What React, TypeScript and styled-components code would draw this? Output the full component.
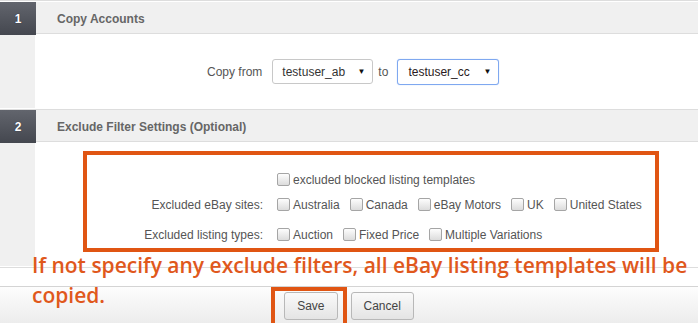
import React from 'react';
import styled, { createGlobalStyle } from 'styled-components';

const GlobalStyle = createGlobalStyle`
  html, body {
    margin: 0;
    padding: 0;
    background: #fff;
  }
  body {
    font-family: 'Liberation Sans', Arial, sans-serif;
    font-size: 12px;
    color: #555;
  }
`;

const sites = ['Australia', 'Canada', 'eBay Motors', 'UK', 'United States'];
const listingTypes = ['Auction', 'Fixed Price', 'Multiple Variations'];

const App = () => {
  return (
    <>
      <GlobalStyle />
      <Page>
        <Section>
          <Header>
            <Badge>1</Badge>
            <HeaderTitle>Copy Accounts</HeaderTitle>
          </Header>
          <Body $height={73}>
            <Gutter />
            <CopyRow>
              <span>Copy from</span>
              <SelectBox>
                <span>testuser_ab</span>
                <Arrow>▼</Arrow>
              </SelectBox>
              <To>to</To>
              <SelectBox $focused>
                <span>testuser_cc</span>
                <Arrow>▼</Arrow>
              </SelectBox>
            </CopyRow>
          </Body>
        </Section>
        <Section>
          <Header>
            <Badge>2</Badge>
            <HeaderTitle>Exclude Filter Settings (Optional)</HeaderTitle>
          </Header>
          <Body $height={123}>
            <Gutter />
            <div>
              <FilterBox>
                <FormLabel />
                <Options>
                  <Option>
                    <Check />
                    excluded blocked listing templates
                  </Option>
                </Options>
                <FormLabel>Excluded eBay sites:</FormLabel>
                <Options>
                  {sites.map((s) => (
                    <Option key={s}>
                      <Check />
                      {s}
                    </Option>
                  ))}
                </Options>
                <FormLabel>Excluded listing types:</FormLabel>
                <Options>
                  {listingTypes.map((s) => (
                    <Option key={s}>
                      <Check />
                      {s}
                    </Option>
                  ))}
                </Options>
              </FilterBox>
            </div>
          </Body>
        </Section>
        <Spacer />
        <Footer>
          <Button>Save</Button>
          <Button>Cancel</Button>
          <SaveMark />
        </Footer>
        <Note>If not specify any exclude filters, all eBay listing templates will be copied.</Note>
      </Page>
    </>
  );
};

export default App;

const Page = styled.div`
  position: relative;
  width: 698px;
  height: 323px;
  overflow: hidden;
  border-top: 1px solid #ddd;
  padding-top: 1px;
  box-sizing: border-box;
`;
const Section = styled.div`
  border-bottom: 1px solid #ddd;
  padding-bottom: 1px;
`;
const Header = styled.div`
  display: grid;
  grid-template-columns: 36px 1fr;
  height: 32px;
  background: #f0f0f0;
  border-bottom: 1px solid #ddd;
  box-sizing: border-box;
`;
const Badge = styled.div`
  display: flex;
  align-items: center;
  justify-content: center;
  background: linear-gradient(#62656d, #44474f);
  color: #fff;
  font-weight: bold;
  font-size: 12px;
  text-shadow: 0 0 1px #223;
  height: 33px;
`;
const HeaderTitle = styled.div`
  display: flex;
  align-items: center;
  padding-left: 21px;
  font-weight: bold;
  font-size: 12px;
  color: #666;
`;
const Body = styled.div<{ $height: number }>`
  display: grid;
  grid-template-columns: 35px 1fr;
  height: ${(p) => p.$height}px;
  margin-top: 1px;
`;
const Gutter = styled.div`
  background: #f0f0f0;
`;
const CopyRow = styled.div`
  display: flex;
  align-items: center;
  padding-left: 172px;
  color: #555;
`;
const SelectBox = styled.div<{ $focused?: boolean }>`
  display: flex;
  align-items: center;
  justify-content: space-between;
  box-sizing: border-box;
  width: ${(p) => (p.$focused ? 102 : 101)}px;
  height: ${(p) => (p.$focused ? 26 : 25)}px;
  margin-left: ${(p) => (p.$focused ? 0 : 10)}px;
  padding: 0 7px 0 ${(p) => (p.$focused ? 10 : 9)}px;
  border: 1px solid ${(p) => (p.$focused ? '#7fa8f0' : '#c8c8c8')};
  box-shadow: ${(p) => (p.$focused ? '0 0 1px #9bbcf5' : 'none')};
  border-radius: 3px;
  background: #fff;
  color: ${(p) => (p.$focused ? '#2a1a22' : '#333')};
  font-size: 12px;
`;
const Arrow = styled.span`
  font-size: 8px;
  color: #111;
`;
const To = styled.span`
  margin: 0 9px 0 5px;
`;
const FilterBox = styled.div`
  display: grid;
  grid-template-columns: 176px 1fr;
  grid-template-rows: 25px 25px 35px;
  column-gap: 14px;
  align-items: center;
  box-sizing: border-box;
  width: 576px;
  height: 101px;
  margin: 8px 0 0 48px;
  padding-top: 12px;
  border: 4px solid #e05513;
`;
const FormLabel = styled.div`
  text-align: right;
  color: #555;
`;
const Options = styled.div`
  display: flex;
  align-items: center;
  gap: 10px;
`;
const Option = styled.label`
  display: flex;
  align-items: center;
  gap: 3px;
  color: #555;
  white-space: nowrap;
`;
const Check = styled.span`
  display: inline-block;
  width: 11px;
  height: 11px;
  border: 1px solid #a5a5a5;
  border-radius: 2px;
  background: linear-gradient(#fdfdfd, #dcdcdc);
`;
const Spacer = styled.div`
  height: 18px;
`;
const Footer = styled.div`
  position: relative;
  display: flex;
  justify-content: center;
  gap: 13px;
  height: 40px;
  padding-top: 5px;
  box-sizing: border-box;
  border-top: 1px solid #d4d4d4;
  background: linear-gradient(#fdfdfd, #ebebeb);
`;
const Button = styled.button`
  height: 28px;
  padding: 0 12px;
  border: 1px solid #b8b8b8;
  border-radius: 3px;
  background: linear-gradient(#fafafa, #e4e4e4);
  color: #444;
  font-family: 'Liberation Sans', Arial, sans-serif;
  font-size: 12px;
`;
const SaveMark = styled.div`
  position: absolute;
  left: 271px;
  top: 0;
  width: 76px;
  height: 44px;
  box-sizing: border-box;
  border: 4px solid #e05513;
`;
const Note = styled.div`
  position: absolute;
  left: 32px;
  top: 249px;
  width: 664px;
  font-family: 'Open Sans', 'Noto Sans', sans-serif;
  font-weight: 600;
  font-size: 21px;
  line-height: 30px;
  color: #e0581c;
`;
